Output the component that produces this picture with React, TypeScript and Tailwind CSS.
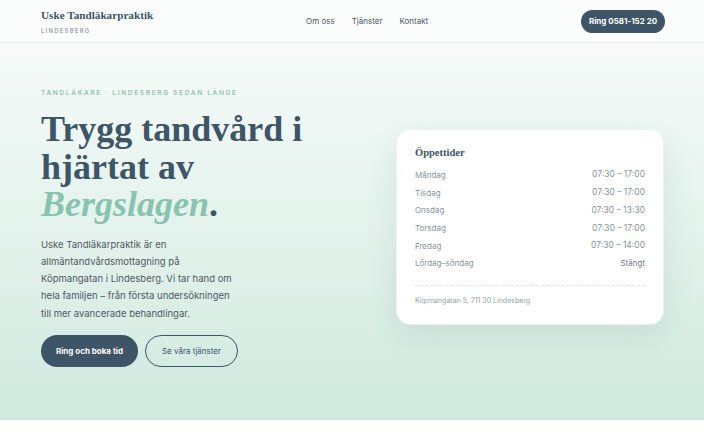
const serif = "font-['Liberation_Serif','DejaVu_Serif',serif]";

const hours = [
  { day: 'Måndag', time: '07:30 – 17:00' },
  { day: 'Tisdag', time: '07:30 – 17:00' },
  { day: 'Onsdag', time: '07:30 – 13:30' },
  { day: 'Torsdag', time: '07:30 – 17:00' },
  { day: 'Fredag', time: '07:30 – 14:00' },
  { day: 'Lördag–söndag', time: 'Stängt' },
];

function Header() {
  return (
    <header className="h-[43px] flex items-center pl-[41px] pr-[39px] bg-[#fbfdfc] border-b border-[#e6ebe9]">
      <div className="flex flex-col">
        <span className={`${serif} font-bold text-[11.2px] leading-[15px] text-[#3d5566]`}>
          Uske Tandläkarpraktik
        </span>
        <span className="mt-[4px] text-[6px] leading-[8px] tracking-[0.2em] font-semibold text-[#9aa5ad]">
          LINDESBERG
        </span>
      </div>
      <nav className="flex-1 flex items-center justify-center gap-[17px] text-[8px] text-[#4d5963]">
        <a>Om oss</a>
        <a>Tjänster</a>
        <a>Kontakt</a>
      </nav>
      <a className="h-[23px] w-[84px] flex items-center justify-center rounded-full bg-[#3d5566] text-white text-[8px] font-bold">
        Ring 0581-152 20
      </a>
    </header>
  );
}

function OpeningHours() {
  return (
    <div className="mt-[86px] w-[268px] rounded-[14px] bg-white shadow-[0_10px_30px_rgba(60,110,95,0.12)] border border-[#eef2f1] px-[18px] pt-[15px] pb-[18px]">
      <h2 className={`${serif} font-bold text-[10.5px] leading-[15px] text-[#3d5566] mb-[6px]`}>Öppettider</h2>
      <ul className="flex flex-col">
        {hours.map((h) => (
          <li key={h.day} className="flex justify-between h-[17.7px] items-center text-[8px] text-[#8a949c]">
            <span>{h.day}</span>
            <span className={h.time === 'Stängt' ? 'text-[#6f7a83]' : 'text-[8.5px]'}>{h.time}</span>
          </li>
        ))}
      </ul>
      <div className="mt-[12.5px] border-t border-dashed border-[#dfe5e3]" />
      <p className="mt-[10px] text-[7px] leading-[10px] text-[#98a1a8]">Köpmangatan 5, 711 30 Lindesberg</p>
    </div>
  );
}

export default function App() {
  return (
    <div className="w-[704px] h-[440px] bg-white font-['Inter','Liberation_Sans',sans-serif]">
      <Header />
      <section className="h-[377px] flex items-start justify-between pl-[41px] pr-[40px] bg-gradient-to-b from-[#f6fbf9] to-[#d0e9df]">
        <div className="w-[300px] pt-[45px]">
          <p className="text-[6.5px] leading-[10px] tracking-[0.26em] font-semibold text-[#8cc4b0]">
            TANDLÄKARE · LINDESBERG SEDAN LÄNGE
          </p>
          <h1 className={`${serif} mt-[13px] font-bold text-[36px] leading-[37.5px] text-[#3d5566]`}>
            Trygg tandvård i<br />
            hjärtat av<br />
            <em className="text-[#88c3ae]">Bergslagen</em>.
          </h1>
          <p className="mt-[12px] w-[200px] text-[9.5px] leading-[17.25px] text-[#4d5963]">
            Uske Tandläkarpraktik är en allmäntandvårdsmottagning på Köpmangatan i Lindesberg. Vi tar hand om hela familjen – från första undersökningen till mer avancerade behandlingar.
          </p>
          <div className="mt-[13px] flex gap-[7px]">
            <a className="h-[32px] w-[97px] rounded-full bg-[#3d5566] text-white text-[8px] font-bold flex items-center justify-center">
              Ring och boka tid
            </a>
            <a className="h-[32px] w-[93px] rounded-full border border-[#3d5566] text-[#3d5566] text-[8px] flex items-center justify-center">
              Se våra tjänster
            </a>
          </div>
        </div>
        <OpeningHours />
      </section>
    </div>
  );
}
